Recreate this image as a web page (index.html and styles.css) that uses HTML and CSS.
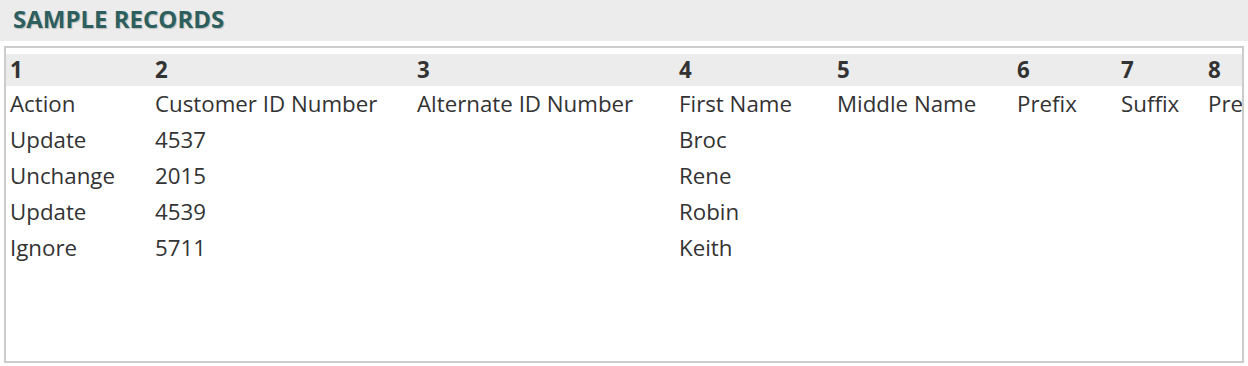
FILE: index.html
```html
<!DOCTYPE html>
<html lang="en">
<head>
<meta charset="utf-8">
<title>Sample Records</title>
<link rel="stylesheet" href="styles.css">
</head>
<body>
<div class="page">
  <div class="title-bar">
    <h2 class="title">SAMPLE RECORDS</h2>
  </div>
  <div class="records-box">
    <div class="records-scroll">
      <table class="records">
        <colgroup>
          <col class="c1"><col class="c2"><col class="c3"><col class="c4"><col class="c5"><col class="c6"><col class="c7"><col class="c8">
        </colgroup>
        <thead>
          <tr class="num-row"><th>1</th><th>2</th><th>3</th><th>4</th><th>5</th><th>6</th><th>7</th><th>8</th></tr>
        </thead>
        <tbody>
          <tr><td>Action</td><td>Customer ID Number</td><td>Alternate ID Number</td><td>First Name</td><td>Middle Name</td><td>Prefix</td><td>Suffix</td><td>Preferred Name</td></tr>
          <tr><td>Update</td><td>4537</td><td></td><td>Broc</td><td></td><td></td><td></td><td></td></tr>
          <tr><td>Unchange</td><td>2015</td><td></td><td>Rene</td><td></td><td></td><td></td><td></td></tr>
          <tr><td>Update</td><td>4539</td><td></td><td>Robin</td><td></td><td></td><td></td><td></td></tr>
          <tr><td>Ignore</td><td>5711</td><td></td><td>Keith</td><td></td><td></td><td></td><td></td></tr>
        </tbody>
      </table>
    </div>
  </div>
</div>
</body>
</html>
```
FILE: styles.css
```css
* { box-sizing: border-box; }
html, body { margin: 0; padding: 0; background: #fff; }
body {
  font-family: "Open Sans", "Noto Sans", sans-serif;
  color: #333;
  width: 1248px;
  height: 366px;
  overflow: hidden;
}
.page { display: flex; flex-direction: column; }
.title-bar {
  background: #ececec;
  height: 41px;
  display: flex;
  align-items: center;
  padding: 0 0 3px 13px;
}
.title {
  margin: 0;
  font-size: 24px;
  font-weight: 700;
  color: #2c5f5e;
  text-shadow: 1px 1px 1px rgba(0,0,0,0.2);
  line-height: 1;
}
.records-box {
  margin: 5px 4px 0 4px;
  height: 317px;
  border: 2px solid #cccccc;
  padding-top: 6px;
  overflow: hidden;
}
.records-scroll { overflow: hidden; height: 100%; }
.records {
  border-collapse: collapse;
  table-layout: fixed;
  width: 1348px;
  font-size: 22.3px;
}
.c1 { width: 145px; }
.c2 { width: 262px; }
.c3 { width: 262px; }
.c4 { width: 158px; }
.c5 { width: 180px; }
.c6 { width: 104px; }
.c7 { width: 87px; }
.c8 { width: 150px; }
.records th, .records td {
  text-align: left;
  padding: 0 0 0 4px;
  white-space: nowrap;
  overflow: hidden;
}
.num-row { background: #ececec; }
.num-row th { height: 32px; font-weight: 700; line-height: 32px; }
.records td { height: 36px; line-height: 36px; font-weight: 400; }
```
